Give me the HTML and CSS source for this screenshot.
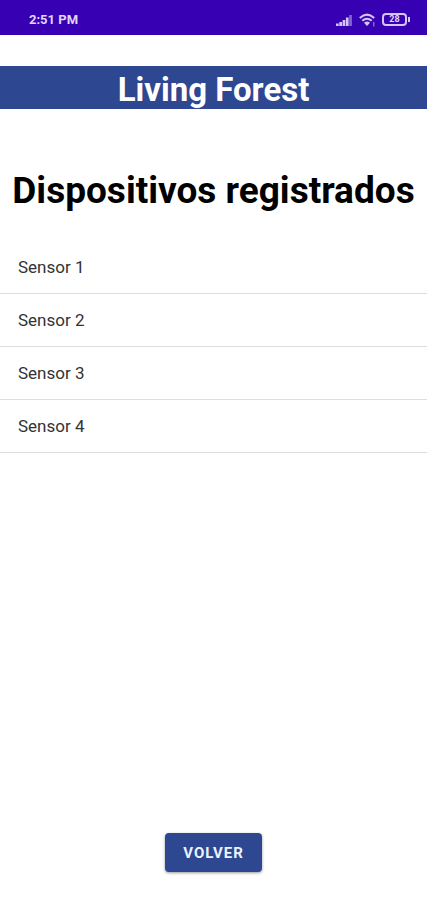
FILE: index.html
```html
<!DOCTYPE html>
<html lang="es">
<head>
  <meta charset="utf-8">
  <meta name="viewport" content="width=device-width, initial-scale=1">
  <title>Living Forest</title>
  <link rel="stylesheet" href="styles.css">
</head>
<body>
  <div class="status">
    <span class="status-time">2:51 PM</span>
    <div class="status-icons">
      <svg class="signal" viewBox="0 0 17 12" aria-hidden="true">
        <path class="bar" d="M0 9.500h2.700V12H0zM3.300 8H6v4H3.300zM6.600 6h2.700v6H6.600zM9.900 3.500h2.700V12H9.900z"/>
        <path class="bar faint" d="M13.200 1h2.700v11h-2.700z"/>
      </svg>
      <svg class="wifi" viewBox="0 0 17 14" aria-hidden="true">
        <path class="arc" d="M.8 5Q8 -1.800 15.200 5M3.300 7.800Q8 3.600 12.700 7.800"/>
        <path class="bar" d="M5 9.700Q8 7.300 11 9.700L8 13z"/>
        <path class="bar faint" d="M14 9h1.500v4.500H14z"/>
      </svg>
      <div class="battery"><span class="battery-body">28</span><span class="battery-tip"></span></div>
    </div>
  </div>
  <header class="brand">Living Forest</header>
  <main class="content">
    <h1 class="title">Dispositivos registrados</h1>
    <ul class="devices">
      <li class="device">Sensor 1</li>
      <li class="device">Sensor 2</li>
      <li class="device">Sensor 3</li>
      <li class="device">Sensor 4</li>
    </ul>
  </main>
  <footer class="actions">
    <button class="back" type="button">VOLVER</button>
  </footer>
</body>
</html>
```
FILE: styles.css
```css
* {
  box-sizing: border-box;
}

body {
  display: flex;
  flex-direction: column;
  min-height: 100vh;
  margin: 0;
  background: #fff;
  color: #000;
  font-family: Roboto, "Liberation Sans", sans-serif;
}

.status {
  display: flex;
  align-items: center;
  justify-content: space-between;
  height: 35px;
  padding: 4px 17px 0 29px;
  background: #3700b3;
  color: #e2d6fa;
}

.status-time {
  font-size: 13px;
  font-weight: 700;
}

.status-icons {
  display: flex;
  align-items: center;
  gap: 6px;
}

.signal {
  width: 17px;
  height: 12px;
}

.wifi {
  width: 17px;
  height: 14px;
}

.bar {
  fill: #d5c5f5;
}

.faint {
  opacity: 0.5;
}

.arc {
  fill: none;
  stroke: #d5c5f5;
  stroke-width: 2;
}

.battery {
  display: flex;
  align-items: center;
  gap: 1px;
}

.battery-body {
  width: 25px;
  height: 13px;
  border: 2px solid #d5c5f5;
  border-radius: 4px;
  font-size: 9px;
  font-weight: 700;
  line-height: 9px;
  text-align: center;
}

.battery-tip {
  width: 2px;
  height: 5px;
  background: #d5c5f5;
}

.brand {
  margin-top: 31px;
  padding-top: 4px;
  background: #2e4791;
  color: #fff;
  font-size: 33px;
  font-weight: 700;
  line-height: 39px;
  text-align: center;
}

.content {
  flex: 1;
  padding-top: 60px;
}

.title {
  margin: 0;
  font-size: 37px;
  font-weight: 700;
  line-height: 44px;
  text-align: center;
}

.devices {
  margin: 28px 0 0;
  padding: 0;
  list-style: none;
}

.device {
  padding: 16px 18px;
  border-bottom: 1px solid #dedede;
  color: #333;
  font-size: 17px;
  line-height: 20px;
}

.actions {
  display: flex;
  justify-content: center;
  padding-bottom: 28px;
}

.back {
  padding: 11px 18px 9px;
  border: 0;
  border-radius: 4px;
  background: #2e4791;
  box-shadow: 0 1px 3px rgba(0, 0, 0, 0.4);
  color: #eaf2ff;
  font-family: inherit;
  font-size: 15px;
  font-weight: 700;
  letter-spacing: 1px;
  line-height: 19px;
}
```
